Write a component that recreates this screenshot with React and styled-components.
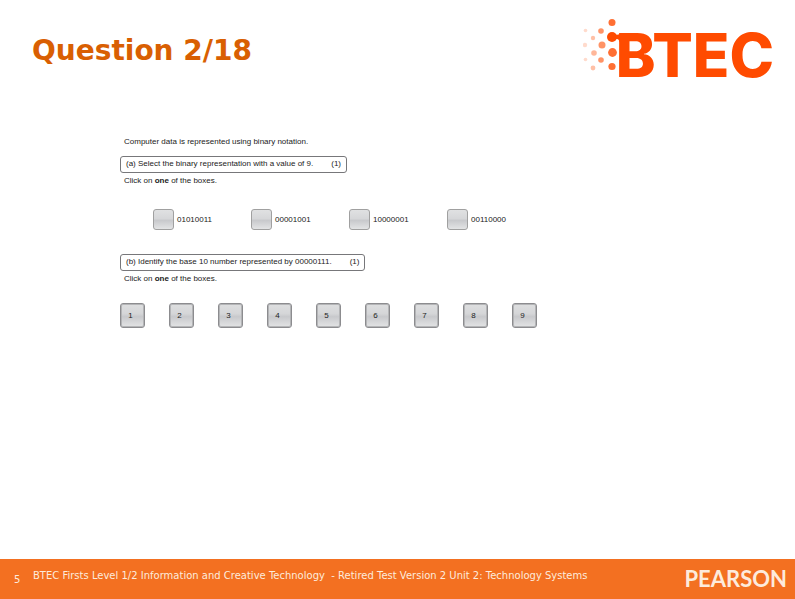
import React from "react";
import styled, { createGlobalStyle } from "styled-components";

const GlobalStyle = createGlobalStyle`
  * { box-sizing: border-box; }
  body { margin: 0; background: #fff; }
`;

const Page = styled.div`
  display: flex;
  flex-direction: column;
  min-height: 100vh;
  font-family: Verdana, "DejaVu Sans", sans-serif;
`;

const Header = styled.header`
  display: flex;
  justify-content: space-between;
  align-items: flex-start;
  height: 100px;
  padding: 16px 21px 0 32px;
`;

const Title = styled.h1`
  margin: 17px 0 0;
  font-size: 28px;
  line-height: 36px;
  font-weight: 700;
  color: #d95f02;
`;

const BtecLogo = styled.div`
  display: flex;
  align-items: flex-start;
  color: #ff4b00;
`;

const BtecDots = styled.svg`
  display: block;
  width: 48px;
  height: 64px;
  margin-right: -15px;
`;

const BtecName = styled.span`
  font-family: Inter, sans-serif;
  font-size: 60px;
  line-height: 78px;
  font-weight: 800;
`;

const Quiz = styled.main`
  flex: 1;
  padding: 34px 32px 0 120px;
  font-family: "Liberation Sans", Arial, sans-serif;
  font-size: 8px;
  line-height: 16px;
  color: #222;
`;

const Line = styled.p`
  margin: 0;
  padding-left: 4px;
`;

const Prompt = styled.h2`
  display: flex;
  width: fit-content;
  margin: ${(p) => p.$top}px 0 0;
  gap: 18px;
  padding: 0 5px 2px;
  border: 1px solid #77777a;
  border-radius: 3px;
  font-size: 8px;
  line-height: 13px;
  font-weight: 400;
`;

const Options = styled.fieldset`
  display: grid;
  grid-template-columns: repeat(4, 98px);
  margin: 20px 0 0;
  padding: 0 0 0 33px;
  border: 0;
`;

const Option = styled.label`
  display: flex;
  align-items: center;
  gap: 3px;
`;

const OptionBox = styled.input`
  appearance: none;
  flex: none;
  width: 21px;
  height: 21px;
  margin: 0;
  border: 1px solid #a0a0a0;
  border-radius: 3px;
  background: linear-gradient(#e0e1e2, #d6d7d9 45%, #c8c9cc 55%, #e3e4e5);
  &:checked { border-color: #333; background: #b5b7bb; }
`;

const Keys = styled.div`
  display: grid;
  grid-template-columns: repeat(9, 25px);
  gap: 24px;
  margin-top: 16px;
`;

const Key = styled.button`
  height: 25px;
  padding: 0 4px 0 0;
  border: 1px solid #8c8c8f;
  border-radius: 3px;
  background: linear-gradient(#dedfe0, #d5d6d8 42%, #c8c9cc 55%, #e3e4e5);
  box-shadow: inset 0 0 0 1px #b4b5b7;
  font: inherit;
  color: #222;
`;

const Footer = styled.footer`
  display: flex;
  align-items: center;
  height: 40px;
  padding: 0 8px 0 14px;
  background: #f37021;
  color: #fdebdc;
  font-size: 10px;
`;

const PageNumber = styled.span`
  width: 19px;
`;

const DeckTitle = styled.span`
  flex: 1;
  padding-bottom: 8px;
  white-space: pre;
`;

const Pearson = styled.span`
  font-family: Lato, sans-serif;
  font-size: 22px;
  line-height: 26px;
  font-weight: 700;
`;

const dots = [
  [29, 6.5, 3.5, 0.8],
  [29, 21, 5, 1],
  [18, 15, 2.8, 0.6],
  [10, 22, 2.2, 0.35],
  [2.5, 14.5, 1.8, 0.2],
  [19, 29, 3.5, 0.6],
  [2, 29, 2.2, 0.2],
  [11, 37, 2.8, 0.4],
  [29.5, 36.5, 4.4, 0.8],
  [18, 44, 2.8, 0.6],
  [2.5, 43.5, 1.8, 0.2],
  [10, 52, 2.4, 0.35],
  [29, 50.5, 3.6, 0.8],
];

const values = ["01010011", "00001001", "10000001", "00110000"];
const digits = [1, 2, 3, 4, 5, 6, 7, 8, 9];

export default function App() {
  return (
    <Page>
      <GlobalStyle />
      <Header>
        <Title>Question 2/18</Title>
        <BtecLogo>
          <BtecDots viewBox="0 0 48 64" aria-hidden="true">
            {dots.map(([cx, cy, r, o]) => (
              <circle key={`${cx}-${cy}`} cx={cx} cy={cy} r={r} fill="#ff4b00" opacity={o} />
            ))}
            <path d="M31 17C33 19.5 35 19 37 17.5H40V26H36.5C36 22.5 33 22 31 25Z" fill="#ff4b00" />
          </BtecDots>
          <BtecName>BTEC</BtecName>
        </BtecLogo>
      </Header>
      <Quiz>
        <Line>Computer data is represented using binary notation.</Line>
        <Prompt $top={6}>
          <span>(a) Select the binary representation with a value of 9.</span>
          <span>(1)</span>
        </Prompt>
        <Line>Click on <b>one</b> of the boxes.</Line>
        <Options aria-label="Binary representation of 9">
          {values.map((v) => (
            <Option key={v}>
              <OptionBox type="radio" name="binary" value={v} />
              {v}
            </Option>
          ))}
        </Options>
        <Prompt $top={24}>
          <span>(b) Identify the base 10 number represented by 00000111.</span>
          <span>(1)</span>
        </Prompt>
        <Line>Click on <b>one</b> of the boxes.</Line>
        <Keys>
          {digits.map((d) => (
            <Key key={d} type="button">{d}</Key>
          ))}
        </Keys>
      </Quiz>
      <Footer>
        <PageNumber>5</PageNumber>
        <DeckTitle>{"BTEC Firsts Level 1/2 Information and Creative Technology  - Retired Test Version 2 Unit 2: Technology Systems"}</DeckTitle>
        <Pearson>PEARSON</Pearson>
      </Footer>
    </Page>
  );
}
